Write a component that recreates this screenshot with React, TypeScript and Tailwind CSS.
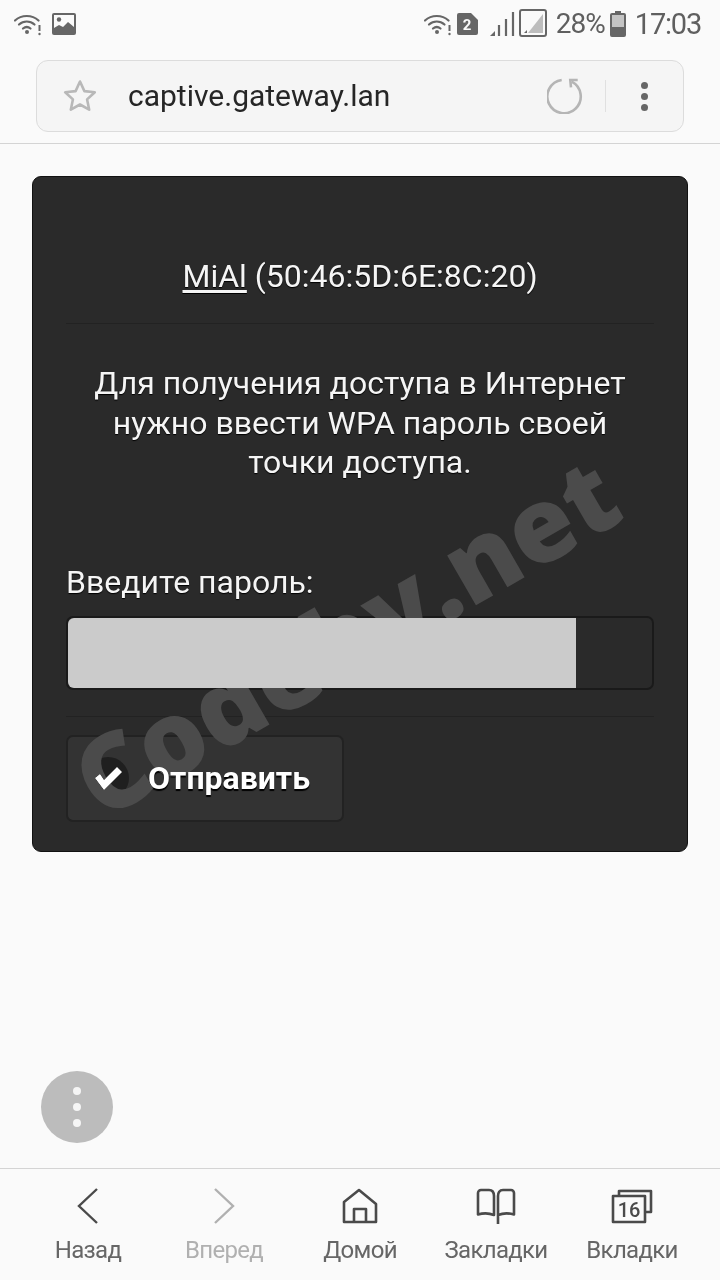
const WifiAlert = () => (
  <svg width="28" height="24" viewBox="0 0 28 24" fill="none" stroke="#666" strokeLinecap="round">
    <path d="M1 8.5C7.5 2.5 18 2.5 24.5 8.5" strokeWidth="2.2" />
    <path d="M5 12.5C9.5 8.5 16 8.5 20.5 12.5" strokeWidth="2.2" />
    <path d="M9 16.5C11.5 14.5 14 14.5 16.5 16.5" strokeWidth="2.2" />
    <circle cx="13" cy="20" r="2" fill="#666" stroke="none" />
    <path d="M25.5 13v6" strokeWidth="2" strokeLinecap="butt" />
    <circle cx="25.5" cy="22" r="1.2" fill="#666" stroke="none" />
  </svg>
);

const StatusBar = () => (
  <div className="flex h-[48px] items-center justify-between pl-[14px] pr-[19px] text-[#5f5f5f]">
    <div className="flex items-center gap-[10px]">
      <WifiAlert />
      <svg width="24" height="22" viewBox="0 0 24 22">
        <rect x="0" y="0" width="24" height="22" rx="2" fill="#666" />
        <rect x="2" y="2" width="20" height="16" fill="#fafafa" />
        <circle cx="7" cy="6.5" r="2.2" fill="#666" />
        <path d="M2 18v-3l5-3 4 2 5-5 6 5v4z" fill="#666" />
      </svg>
    </div>
    <div className="flex items-center">
      <WifiAlert />
      <svg className="ml-[5px]" width="21" height="22" viewBox="0 0 21 22">
        <path d="M0 2a2 2 0 0 1 2-2h12l7 7v13a2 2 0 0 1-2 2H2a2 2 0 0 1-2-2z" fill="#666" />
        <text x="10" y="17" textAnchor="middle" fontSize="15" fontWeight="700" fill="#fafafa" fontFamily="Roboto, sans-serif">2</text>
      </svg>
      <svg className="mb-[2px] ml-[12px]" width="58" height="28" viewBox="0 0 58 28">
        <path d="M0 27l5-5v5z" fill="#666" />
        <path d="M9 27V16M16 27V10M23 27V3" stroke="#666" strokeWidth="2.2" />
        <rect x="30" y="1" width="26" height="26" rx="2" fill="none" stroke="#666" strokeWidth="2" />
        <path d="M38 24L53 5v19z" fill="#bdbdbd" />
        <path d="M34 24l3-3v3z" fill="#666" />
      </svg>
      <span className="ml-[8px] font-[Roboto,sans-serif] text-[28px] leading-none tracking-[-1px]">28%</span>
      <svg className="ml-[5px]" width="16" height="26" viewBox="0 0 16 26">
        <path d="M5 0h6v2h3a2 2 0 0 1 2 2v20a2 2 0 0 1-2 2H2a2 2 0 0 1-2-2V4a2 2 0 0 1 2-2h3z" fill="#666" />
        <rect x="2" y="4" width="12" height="12" fill="#c4c4c4" />
      </svg>
      <span className="ml-[9px] font-[Roboto,sans-serif] text-[29px] leading-none tracking-[-1.2px]">17:03</span>
    </div>
  </div>
);

const UrlBar = () => (
  <div className="border-b border-[#d4d4d4] px-[36px] pb-[11px] pt-[12px]">
    <div className="flex h-[72px] items-center rounded-[12px] border border-[#dcdcdc] bg-[#f5f5f5] pl-[26px] pr-[35px]">
      <svg width="34" height="34" viewBox="0 0 34 34" fill="none" stroke="#b8b8b8" strokeWidth="2.6" strokeLinejoin="round">
        <path d="M17 2.500l4.400 9.600 10.400 1.200-7.700 7.100 2.100 10.300L17 25.500l-9.200 5.200 2.100-10.300-7.700-7.100 10.400-1.200z" />
      </svg>
      <span className="ml-[31px] font-[Roboto,sans-serif] text-[30px] leading-none text-[#262626]">captive.gateway.lan</span>
      <div className="ml-auto flex items-center">
        <svg width="36" height="36" viewBox="0 0 36 36" fill="none" stroke="#b5b5b5" strokeWidth="2.600">
          <path d="M14.700 2A16.700 16.700 0 1 0 24.700 3.700" />
          <path d="M30.700 2H23.300L24 9.300" />
        </svg>
        <div className="ml-[22px] h-[32px] w-[1px] bg-[#e0e0e0]" />
        <div className="ml-[35px] flex flex-col gap-[4px]">
          <div className="h-[7px] w-[7px] rounded-full bg-[#666]" />
          <div className="h-[7px] w-[7px] rounded-full bg-[#666]" />
          <div className="h-[7px] w-[7px] rounded-full bg-[#666]" />
        </div>
      </div>
    </div>
  </div>
);

const Card = () => (
  <div className="relative mx-[32px] mt-[32px] h-[676px] overflow-hidden rounded-[9px] border border-[#111] bg-[#2a2a2a] px-[33px] pt-[79px] font-[Roboto,sans-serif] text-[#f5f5f5]">
    <div className="border-b border-[#222] pb-[27px] text-center text-[32px] leading-[40px] [text-shadow:0_1px_1px_#000]">
      <span className="underline underline-offset-[3px]">MiAl</span> (50:46:5D:6E:8C:20)
    </div>
    <p className="mt-[40px] text-center text-[32px] leading-[39.5px] [text-shadow:0_1px_1px_#000]">
      Для получения доступа в Интернет
      <br />
      нужно ввести WPA пароль своей
      <br />
      точки доступа.
    </p>
    <div className="mt-[79px] text-[32px] leading-[40px] [text-shadow:0_1px_1px_#000]">Введите пароль:</div>
    <div className="mt-[14px] h-[74px] rounded-[7px] border-2 border-[#1a1a1a] bg-[#2a2a2a]">
      <div className="h-full w-[508px] rounded-l-[6px] bg-[#cbcbcb]" />
    </div>
    <div className="mt-[26px] border-t border-[#222]" />
    <button className="mt-[18px] flex h-[87px] w-[278px] items-center rounded-[7px] border-2 border-[#222] bg-[#333] pl-[19px]">
      <svg width="42" height="42" viewBox="0 0 42 42">
        <circle cx="21" cy="21" r="21" fill="#1f1f1f" />
        <path d="M8 21l5-4 4 6 13-13 5 5-18 18z" fill="#fff" />
      </svg>
      <span className="ml-[19px] text-[32px] font-bold leading-none text-white [text-shadow:0_2px_1px_#000]">Отправить</span>
    </button>
    <div className="pointer-events-none absolute left-[8px] top-[406px] -rotate-[30deg] whitespace-nowrap font-['Open_Sans',sans-serif] text-[104px] font-extrabold leading-none text-[#4b4b4b] mix-blend-lighten">
      Codeby.net
    </div>
  </div>
);

const Fab = () => (
  <div className="ml-[41px] mt-[219px] flex h-[72px] w-[72px] flex-col items-center justify-center gap-[8px] rounded-full bg-[#bcbcbc]">
    <div className="h-[8px] w-[8px] rounded-full bg-[#f5f5f5]" />
    <div className="h-[8px] w-[8px] rounded-full bg-[#f5f5f5]" />
    <div className="h-[8px] w-[8px] rounded-full bg-[#f5f5f5]" />
  </div>
);

const items = [
  {
    label: "Назад",
    color: "#666",
    icon: (
      <svg width="22" height="36" viewBox="0 0 22 36" fill="none" stroke="#4a4a4a" strokeWidth="2.400">
        <path d="M20 1L2 18l18 17" />
      </svg>
    ),
  },
  {
    label: "Вперед",
    color: "#b0b0b0",
    icon: (
      <svg width="22" height="36" viewBox="0 0 22 36" fill="none" stroke="#b0b0b0" strokeWidth="2.400">
        <path d="M2 1l18 17L2 35" />
      </svg>
    ),
  },
  {
    label: "Домой",
    color: "#666",
    icon: (
      <svg width="36" height="36" viewBox="0 0 36 36" fill="none" stroke="#4a4a4a" strokeWidth="2.600" strokeLinejoin="round">
        <path d="M2 34V14L17 2l17 14v18z" />
        <path d="M12 34V21h12v13" />
      </svg>
    ),
  },
  {
    label: "Закладки",
    color: "#666",
    icon: (
      <svg width="40" height="36" viewBox="0 0 40 36" fill="none" stroke="#4a4a4a" strokeWidth="2.600" strokeLinejoin="round">
        <path d="M18 27C13 25 7 25 2 26.500V5a3 3 0 0 1 3-3h8c3.500 0 5 2.500 5 6z" />
        <path d="M22 36V8c0-3.500 1.500-6 5-6h8a3 3 0 0 1 3 3v21.500C33 25 27 25 22 27" />
      </svg>
    ),
  },
  {
    label: "Вкладки",
    color: "#666",
    icon: (
      <svg width="42" height="36" viewBox="0 0 42 36" fill="none" stroke="#4a4a4a" strokeWidth="2.600" strokeLinejoin="round">
        <path d="M8 8V3h32v21h-6" />
        <rect x="2" y="8" width="32" height="26" fill="#fafafa" />
        <text x="18" y="29" textAnchor="middle" fontSize="20" fontWeight="500" fill="#4a4a4a" stroke="none" fontFamily="Roboto, sans-serif">16</text>
      </svg>
    ),
  },
];

const BottomBar = () => (
  <div className="mt-[25px] grid h-[112px] grid-cols-5 border-t border-[#d4d4d4] px-[20px] pt-[19px] font-[Roboto,sans-serif]">
    {items.map((item) => (
      <div key={item.label} className="flex flex-col items-center">
        <div className="flex h-[36px] items-center justify-center">{item.icon}</div>
        <span className="mt-[12px] whitespace-nowrap text-[24px] leading-[28px] tracking-[-0.7px]" style={{ color: item.color }}>
          {item.label}
        </span>
      </div>
    ))}
  </div>
);

export default function App() {
  return (
    <div className="h-[1280px] w-[720px] overflow-hidden bg-[#fafafa]">
      <StatusBar />
      <UrlBar />
      <Card />
      <Fab />
      <BottomBar />
    </div>
  );
}
